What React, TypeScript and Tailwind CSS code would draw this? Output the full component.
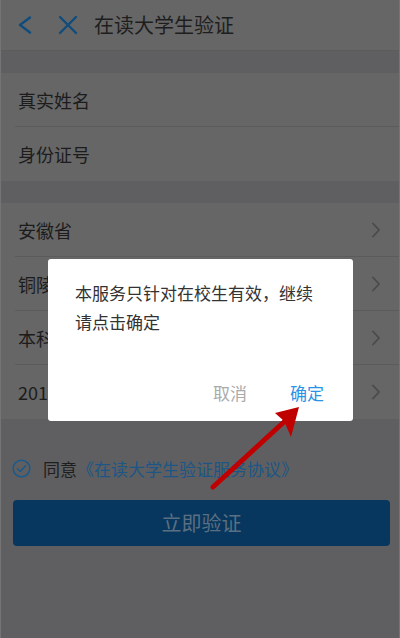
const font = { fontFamily: '"Noto Sans CJK SC", "Noto Sans", sans-serif' }

function Row({ label, arrow, divider }: { label: string; arrow?: boolean; divider?: boolean }) {
  return (
    <div className="relative flex h-[54px] items-center bg-[#666666] pl-[17px] pr-[19px]">
      <span className="flex-1 text-[18px] text-[#1c1c1c]">{label}</span>
      {arrow && (
        <svg width="8" height="16" viewBox="0 0 8 16" fill="none" stroke="#4a4a4a" strokeWidth="1.8" strokeLinecap="round" strokeLinejoin="round">
          <path d="M1 1.5l6 6.5-6 6.5" />
        </svg>
      )}
      {divider && <div className="absolute bottom-0 left-[14px] right-0 h-px bg-[#5b5b5b]" />}
    </div>
  )
}

export default function App() {
  return (
    <div style={font} className="relative h-[638px] w-[400px] overflow-hidden border-x border-[#747474] bg-[#5f5f61]">
      <header className="flex h-[51px] items-center border-b border-[#5c5c5c] bg-[#666666]">
        <svg className="ml-[17px]" width="14" height="18" viewBox="0 0 14 18" fill="none" stroke="#104c7c" strokeWidth="2.4" strokeLinecap="round" strokeLinejoin="round">
          <path d="M12 1.5L2 9l10 7.5" />
        </svg>
        <svg className="ml-[26px]" width="20" height="20" viewBox="0 0 20 20" fill="none" stroke="#104c7c" strokeWidth="2.4" strokeLinecap="round">
          <path d="M2 2l16 16M18 2L2 18" />
        </svg>
        <span className="ml-[16px] text-[20px] text-[#1e1e1e]">在读大学生验证</span>
      </header>

      <div className="h-[22px]" />
      <div>
        <Row label="真实姓名" divider />
        <Row label="身份证号" />
      </div>

      <div className="h-[22px]" />
      <div>
        <Row label="安徽省" arrow divider />
        <Row label="铜陵学院" arrow divider />
        <Row label="本科" arrow divider />
        <Row label="2014" arrow />
      </div>

      <div className="mt-[37px] flex items-center pl-[11px] text-[17px]">
        <svg width="19" height="19" viewBox="0 0 20 20" fill="none" stroke="#1a5a8c" strokeWidth="1.6" strokeLinecap="round" strokeLinejoin="round">
          <circle cx="10" cy="10" r="8.8" />
          <path d="M5.8 10.3l2.9 2.8 5.6-5.9" />
        </svg>
        <span className="ml-[12px] text-[#1e1e1e]">同意</span>
        <span className="text-[#1b5686]">《在读大学生验证服务协议》</span>
      </div>

      <button className="mx-3 mt-[18px] flex h-[46px] w-[377px] items-center justify-center rounded-[4px] bg-[#07375e] text-[20px] text-[#5b6f82]">
        立即验证
      </button>

      <div className="absolute left-[47px] top-[259px] h-[162px] w-[305px] rounded-[3px] bg-white">
        <p className="px-[27px] pt-[19px] text-[17px] leading-[29px] text-[#333333]">
          本服务只针对在校生有效，继续请点击确定
        </p>
        <div className="absolute bottom-[16px] right-[29px] flex gap-[43px] text-[17px]">
          <span className="text-[#aaaaaa]">取消</span>
          <span className="text-[#2a93e6]">确定</span>
        </div>
      </div>

      <svg className="absolute left-0 top-0" width="400" height="638" viewBox="0 0 400 638">
        <line x1="212" y1="487" x2="284" y2="421" stroke="#c00000" strokeWidth="5" strokeLinecap="round" />
        <polygon points="298,407 274,413 283,421 290,437" fill="#c00000" />
      </svg>
    </div>
  )
}
